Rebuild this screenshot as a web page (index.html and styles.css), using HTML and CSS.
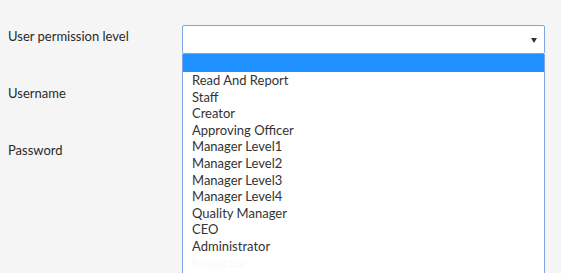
FILE: index.html
```html
<!DOCTYPE html>
<html lang="en">
<head>
    <meta charset="UTF-8">
    <title>User</title>
    <link rel="stylesheet" href="styles.css">
</head>
<body>
    <form class="user-form">
        <div class="row">
            <label class="label">User permission level</label>
            <div class="field">
                <div class="select">
                    <span class="arrow"></span>
                </div>
                <ul class="options">
                    <li class="selected">&nbsp;</li>
                    <li>Read And Report</li>
                    <li>Staff</li>
                    <li>Creator</li>
                    <li>Approving Officer</li>
                    <li>Manager Level1</li>
                    <li>Manager Level2</li>
                    <li>Manager Level3</li>
                    <li>Manager Level4</li>
                    <li>Quality Manager</li>
                    <li>CEO</li>
                    <li>Administrator</li>
                    <li class="faded">Inspector</li>
                </ul>
            </div>
        </div>
        <div class="row">
            <label class="label">Username</label>
            <div class="field"><input class="input" type="text"></div>
        </div>
        <div class="row">
            <label class="label">Password</label>
            <div class="field"><input class="input" type="password"></div>
        </div>
    </form>
</body>
</html>
```

FILE: styles.css
```css
html {
    height: 100%;
    overflow: hidden;
}

body {
    font-family: Lato, "Noto Sans", sans-serif;
    font-size: 13px;
    background-color: #f5f5f5;
    color: #333;
    margin: 0;
    padding: 0;
    height: 100%;
    overflow: hidden;
}

.user-form {
    padding: 25px 0 0 8px;
}

.row {
    display: grid;
    grid-template-columns: 174px 363px;
    height: 57px;
}

.label {
    padding-top: 3px;
    color: #2a2a2a;
    line-height: 16px;
}

.field {
    position: relative;
}

.select {
    height: 27px;
    background-color: #fff;
    border: 1px solid #7ea2e4;
    border-radius: 2px;
    display: flex;
    justify-content: flex-end;
    align-items: center;
    padding-right: 7px;
}

.arrow {
    width: 0;
    height: 0;
    border-left: 3px solid transparent;
    border-right: 3px solid transparent;
    border-top: 5px solid #333;
    margin-top: 2px;
}

.input {
    display: none;
}

.options {
    position: absolute;
    top: 29px;
    left: 0;
    width: 361px;
    margin: 0;
    padding: 0;
    list-style: none;
    background-color: #fff;
    border: 1px solid #7ea2e4;
    border-top: none;
    height: 300px;
    z-index: 2;
}

.options li {
    height: 16.6px;
    line-height: 16.6px;
    padding-left: 9px;
    color: #333;
}

.options li.selected {
    height: 18px;
    background-color: #1e90ff;
}

.options li.faded {
    color: #fbf9f2;
}
```
